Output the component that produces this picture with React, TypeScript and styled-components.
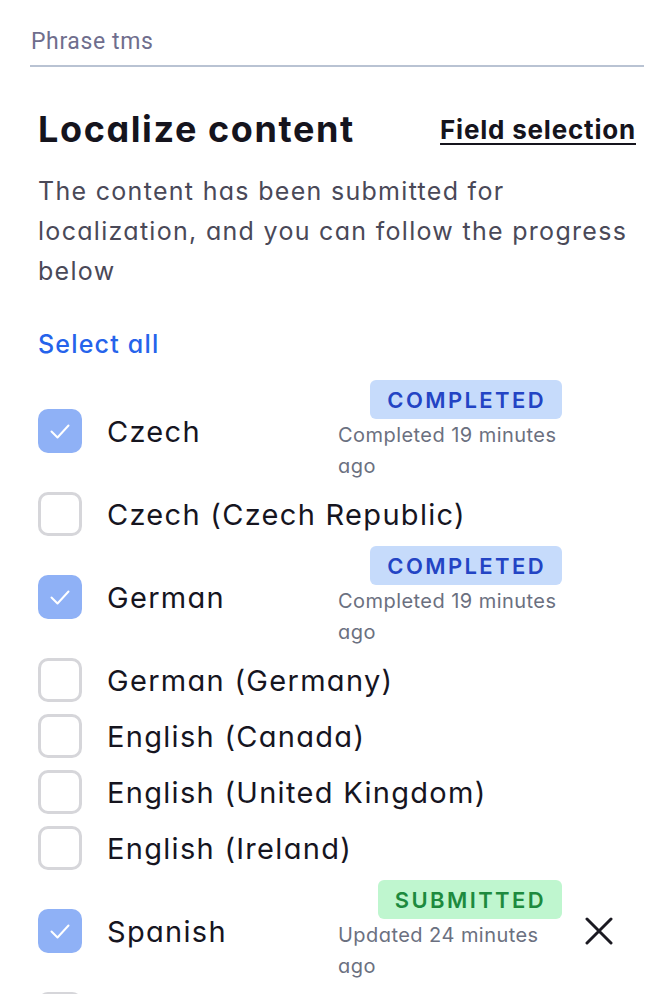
import styled, { createGlobalStyle } from "styled-components";

type Status = {
	kind: "completed" | "submitted";
	note: string;
	removable?: boolean;
};

type Locale = {
	name: string;
	checked: boolean;
	status?: Status;
};

const locales: Locale[] = [
	{
		name: "Czech",
		checked: true,
		status: { kind: "completed", note: "Completed 19 minutes ago" },
	},
	{ name: "Czech (Czech Republic)", checked: false },
	{
		name: "German",
		checked: true,
		status: { kind: "completed", note: "Completed 19 minutes ago" },
	},
	{ name: "German (Germany)", checked: false },
	{ name: "English (Canada)", checked: false },
	{ name: "English (United Kingdom)", checked: false },
	{ name: "English (Ireland)", checked: false },
	{
		name: "Spanish",
		checked: true,
		status: {
			kind: "submitted",
			note: "Updated 24 minutes ago",
			removable: true,
		},
	},
	{ name: "Spanish (Spain)", checked: false },
];

const GlobalStyle = createGlobalStyle`
	html, body {
		margin: 0;
		padding: 0;
		background: #ffffff;
	}
	body {
		font-family: Inter, "Noto Sans", sans-serif;
		font-feature-settings: "cv11" 1;
		color: #16151f;
	}
`;

const Page = styled.div`
	width: 662px;
	height: 994px;
	overflow: hidden;
	box-sizing: border-box;
	padding: 28px 18px 0 30px;
`;

const PluginHeader = styled.div`
	font-family: Roboto, "Noto Sans", sans-serif;
	font-size: 23px;
	line-height: 28px;
	letter-spacing: 0.6px;
	color: #6f6e8d;
	padding: 0 0 0 1px;
	height: 37px;
	border-bottom: 2px solid #b9c3d3;
`;

const Content = styled.div`
	padding: 0 8px 0 8px;
`;

const TitleRow = styled.div`
	display: flex;
	align-items: center;
	justify-content: space-between;
	margin-top: 39px;
	height: 46px;
`;

const Title = styled.h1`
	margin: 0;
	font-size: 36px;
	font-weight: 700;
	letter-spacing: 1.6px;
	color: #15141d;
`;

const FieldLink = styled.a`
	font-size: 26px;
	font-weight: 700;
	color: #15141d;
	text-decoration: underline;
	text-underline-offset: 4px;
	text-decoration-thickness: 2px;
	letter-spacing: 0.8px;
	cursor: pointer;
`;

const Description = styled.p`
	margin: 19px 0 0;
	font-size: 25px;
	line-height: 40px;
	color: #4a4958;
	letter-spacing: 1.3px;
`;

const SelectAll = styled.button`
	display: block;
	margin: 37px 0 0;
	padding: 0;
	border: none;
	background: none;
	font-family: Inter, "Noto Sans", sans-serif;
	font-feature-settings: "cv11" 1;
	font-size: 25px;
	line-height: 32px;
	font-weight: 500;
	letter-spacing: 1.2px;
	color: #2563eb;
	cursor: pointer;
`;

const List = styled.div`
	margin-top: 16px;
	display: flex;
	flex-direction: column;
`;

const Row = styled.div`
	display: flex;
	align-items: center;
	padding: 4px 0;
	min-height: 48px;
`;

const Box = styled.span<{ $checked: boolean }>`
	flex: none;
	box-sizing: border-box;
	width: 44px;
	height: 44px;
	border-radius: 10px;
	display: flex;
	align-items: center;
	justify-content: center;
	background: ${(p) => (p.$checked ? "#8fb1f6" : "#ffffff")};
	border: ${(p) => (p.$checked ? "none" : "3px solid #d6d6da")};
`;

const Label = styled.span`
	flex: 1;
	margin-left: 25px;
	font-size: 29px;
	letter-spacing: 1.3px;
	color: #16151f;
	white-space: nowrap;
`;

const StatusCol = styled.div`
	flex: none;
	width: 224px;
	display: flex;
	flex-direction: column;
	align-items: flex-start;
`;

const Badge = styled.span<{ $kind: Status["kind"] }>`
	align-self: flex-end;
	height: 39px;
	box-sizing: border-box;
	padding: 0 16px 0 17px;
	display: flex;
	align-items: center;
	border-radius: 6px;
	font-size: 22px;
	font-weight: 600;
	letter-spacing: 2.4px;
	background: ${(p) => (p.$kind === "completed" ? "#c6dbfb" : "#bff6cf")};
	color: ${(p) => (p.$kind === "completed" ? "#2344c4" : "#1d8a3e")};
`;

const Note = styled.span`
	margin-top: 1px;
	font-size: 20px;
	line-height: 31px;
	letter-spacing: 0.45px;
	color: #6b7080;
	padding-right: 2px;
`;

const ActionCol = styled.div`
	flex: none;
	width: 74px;
	display: flex;
	justify-content: center;
`;

const RemoveButton = styled.button`
	border: none;
	background: none;
	padding: 0;
	width: 32px;
	height: 32px;
	display: flex;
	align-items: center;
	justify-content: center;
	cursor: pointer;
`;

function Check() {
	return (
		<svg width="26" height="26" viewBox="0 0 26 26" fill="none">
			<path
				d="M4.5 13.5l6 6L21.5 7.5"
				stroke="#ffffff"
				strokeWidth="2"
				strokeLinecap="round"
				strokeLinejoin="round"
			/>
		</svg>
	);
}

function Cross() {
	return (
		<svg width="28" height="28" viewBox="0 0 28 28" fill="none">
			<path
				d="M2 2L26 26M26 2L2 26"
				stroke="#1b1a22"
				strokeWidth="3"
				strokeLinecap="round"
			/>
		</svg>
	);
}

function LocaleRow({ locale }: { locale: Locale }) {
	return (
		<Row>
			<Box $checked={locale.checked}>{locale.checked && <Check />}</Box>
			<Label>{locale.name}</Label>
			{locale.status && (
				<>
					<StatusCol>
						<Badge $kind={locale.status.kind}>
							{locale.status.kind === "completed" ? "COMPLETED" : "SUBMITTED"}
						</Badge>
						<Note>{locale.status.note}</Note>
					</StatusCol>
					<ActionCol>
						{locale.status.removable && (
							<RemoveButton aria-label="Remove">
								<Cross />
							</RemoveButton>
						)}
					</ActionCol>
				</>
			)}
		</Row>
	);
}

function App() {
	return (
		<Page>
			<GlobalStyle />
			<PluginHeader>Phrase tms</PluginHeader>
			<Content>
				<TitleRow>
					<Title>Localize content</Title>
					<FieldLink>Field selection</FieldLink>
				</TitleRow>
				<Description>
					The content has been submitted for localization, and you can follow
					the progress below
				</Description>
				<SelectAll>Select all</SelectAll>
				<List>
					{locales.map((locale) => (
						<LocaleRow key={locale.name} locale={locale} />
					))}
				</List>
			</Content>
		</Page>
	);
}

export default App;
